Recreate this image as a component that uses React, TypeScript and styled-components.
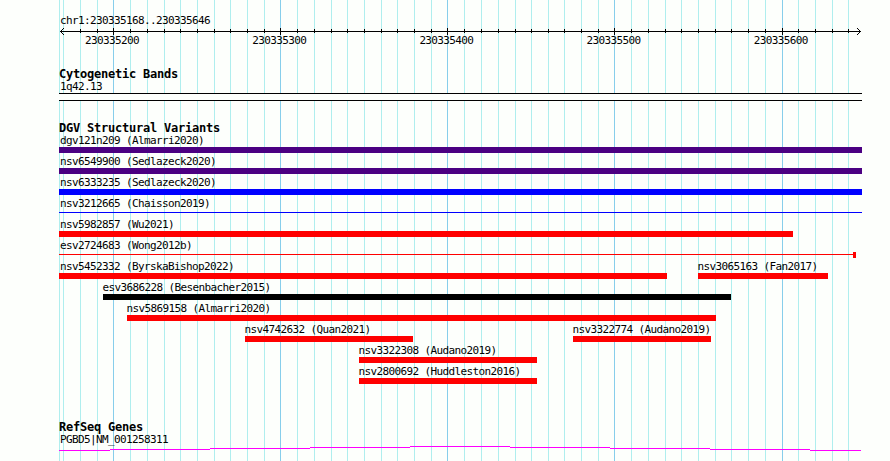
import styled, { createGlobalStyle } from 'styled-components'

const Colors = {
  Background: '#fdfffc',
  Grid: '#afeeee',
  GridMajor: '#87ceeb',
  Black: '#000',
  Indigo: '#4b0082',
  Blue: '#00f',
  Red: '#f00',
  Magenta: '#f0f',
}

const TRACK_WIDTH = 803

// offsets are pixels from the left edge of the tracks
const gridLines = [
  0, 4, 21, 38, 54, 71, 88, 105, 121, 138, 155, 171, 188, 205, 221, 238, 255, 272, 288, 305, 322, 338, 355, 372, 388,
  405, 422, 439, 456, 472, 489, 505, 522, 539, 555, 572, 589, 606, 622, 639, 656, 672, 689, 706, 723, 739, 756, 773,
  789,
]
const majorLines = [54, 221, 388, 555, 723]

const rulerLabels = ['230335200', '230335300', '230335400', '230335500', '230335600']

interface Variant {
  name: string
  start: number
  end: number
  color: string
  shape?: 'bar' | 'line' | 'capped'
}

const lanes: Variant[][] = [
  [{ name: 'dgv121n209 (Almarri2020)', start: 0, end: 803, color: Colors.Indigo }],
  [{ name: 'nsv6549900 (Sedlazeck2020)', start: 0, end: 803, color: Colors.Indigo }],
  [{ name: 'nsv6333235 (Sedlazeck2020)', start: 0, end: 803, color: Colors.Blue }],
  [{ name: 'nsv3212665 (Chaisson2019)', start: 0, end: 803, color: Colors.Blue, shape: 'line' }],
  [{ name: 'nsv5982857 (Wu2021)', start: 0, end: 734, color: Colors.Red }],
  [{ name: 'esv2724683 (Wong2012b)', start: 0, end: 797, color: Colors.Red, shape: 'capped' }],
  [
    { name: 'nsv5452332 (ByrskaBishop2022)', start: 0, end: 608, color: Colors.Red },
    { name: 'nsv3065163 (Fan2017)', start: 639, end: 769, color: Colors.Red },
  ],
  [{ name: 'esv3686228 (Besenbacher2015)', start: 44, end: 672, color: Colors.Black }],
  [{ name: 'nsv5869158 (Almarri2020)', start: 68, end: 657, color: Colors.Red }],
  [
    { name: 'nsv4742632 (Quan2021)', start: 186, end: 354, color: Colors.Red },
    { name: 'nsv3322774 (Audano2019)', start: 514, end: 652, color: Colors.Red },
  ],
  [{ name: 'nsv3322308 (Audano2019)', start: 300, end: 478, color: Colors.Red }],
  [{ name: 'nsv2800692 (Huddleston2016)', start: 300, end: 478, color: Colors.Red }],
]

const GridLines = () => (
  <GridSvg width={TRACK_WIDTH} height="461" shapeRendering="crispEdges">
    {gridLines.map((x) => (
      <rect key={x} x={x} y="0" width="1" height="461" fill={majorLines.includes(x) ? Colors.GridMajor : Colors.Grid} />
    ))}
  </GridSvg>
)

const Ruler = () => (
  <RulerWrapper>
    <Label>chr1:230335168..230335646</Label>
    <RulerSvg width={TRACK_WIDTH} height="7" shapeRendering="crispEdges">
      <rect x="1" y="3" width="801" height="1" />
      {gridLines.slice(2).map((x) => {
        const isMajor = majorLines.includes(x)
        return <rect key={x} x={x} y={isMajor ? 0 : 1} width="1" height={isMajor ? 7 : 4} />
      })}
      {[0, 1, 2, 3].map((i) => (
        <g key={i}>
          <rect x={1 + i} y={3 - i} width="1" height="1" />
          <rect x={1 + i} y={3 + i} width="1" height="1" />
          <rect x={801 - i} y={3 - i} width="1" height="1" />
          <rect x={801 - i} y={3 + i} width="1" height="1" />
        </g>
      ))}
    </RulerSvg>
    <RulerLabels>
      {rulerLabels.map((label) => (
        <Label key={label}>{label}</Label>
      ))}
    </RulerLabels>
  </RulerWrapper>
)

const VariantItem = ({ variant, offset }: { variant: Variant; offset: number }) => (
  <VariantWrapper $offset={offset} $width={variant.end - variant.start}>
    <Label $inset={variant.start === 0 ? 1 : -0.5}>{variant.name}</Label>
    <VariantShape>
      {variant.shape ? <ThinLine $color={variant.color} /> : <Bar $color={variant.color} />}
      {variant.shape === 'capped' && <Cap $color={variant.color} />}
    </VariantShape>
  </VariantWrapper>
)

const App = () => (
  <>
    <GlobalStyle />
    <Page>
      <GridLines />
      <Ruler />
      <CytogeneticTrack>
        <TrackTitle>Cytogenetic Bands</TrackTitle>
        <Label $inset={1}>1q42.13</Label>
        <Band />
      </CytogeneticTrack>
      <VariantsTrack>
        <TrackTitle>DGV Structural Variants</TrackTitle>
        {lanes.map((lane) => (
          <Lane key={lane[0].name}>
            {lane.map((variant, i) => (
              <VariantItem
                key={variant.name}
                variant={variant}
                offset={variant.start - (i > 0 ? lane[i - 1].end : 0)}
              />
            ))}
          </Lane>
        ))}
      </VariantsTrack>
      <GenesTrack>
        <TrackTitle>RefSeq Genes</TrackTitle>
        <Label $inset={1}>PGBD5|NM_001258311</Label>
        <GeneSvg width={TRACK_WIDTH} height="5" shapeRendering="crispEdges">
          {[4, 3, 2, 1, 0, 1, 2, 3, 4].map((y, i) => {
            const x = i === 0 ? 0 : i * 100 - 49
            const end = i === 8 ? 802 : i * 100 + 51
            return <rect key={x} x={x} y={y} width={end - x} height="1" fill={Colors.Magenta} />
          })}
        </GeneSvg>
      </GenesTrack>
    </Page>
  </>
)

export default App

const GlobalStyle = createGlobalStyle`
  body {
    margin: 0;
    background-color: ${Colors.Background};
  }
`

const Page = styled.main`
  position: relative;
  box-sizing: border-box;
  width: 890px;
  height: 461px;
  padding: 15px 28px 0 59px;
  overflow: hidden;
  background-color: ${Colors.Background};
  color: ${Colors.Black};
  font-family: 'DejaVu Sans Mono', monospace;
`

const GridSvg = styled.svg`
  position: absolute;
  top: 0;
  left: 59px;
`

const Label = styled.div<{ $inset?: number }>`
  height: 12px;
  margin-left: ${({ $inset = 0 }) => $inset}px;
  font-size: 11px;
  line-height: 12px;
  letter-spacing: -0.623px;
  white-space: pre;
`

const TrackTitle = styled.h2`
  height: 13px;
  margin: 0;
  font-size: 12px;
  font-weight: bold;
  line-height: 13px;
  letter-spacing: -0.225px;
  white-space: pre;
`

const RulerWrapper = styled.header`
  position: relative;
  height: 53px;

  > ${Label} {
    padding-left: 1px;
  }
`

const RulerSvg = styled.svg`
  display: block;
  margin-top: 1px;
`

const RulerLabels = styled.div`
  display: flex;
  gap: 113.2px;
  padding-left: 26px;

  ${Label} {
    width: 54px;
  }
`

const CytogeneticTrack = styled.section`
  position: relative;
  height: 54px;
`

const Band = styled.div`
  box-sizing: border-box;
  height: 8px;
  border: solid ${Colors.Black};
  border-width: 1px 0;
  background-color: ${Colors.Background};
`

const VariantsTrack = styled.section`
  position: relative;
  height: 299px;
`

const Lane = styled.div`
  display: flex;
  height: 21px;
`

const VariantWrapper = styled.div<{ $offset: number; $width: number }>`
  flex: none;
  width: ${({ $width }) => $width}px;
  margin-left: ${({ $offset }) => $offset}px;
`

const VariantShape = styled.div`
  display: flex;
  height: 6px;
`

const Bar = styled.div<{ $color: string }>`
  flex: 1;
  background-color: ${({ $color }) => $color};
`

const ThinLine = styled(Bar)`
  height: 1px;
  margin-top: 2px;
`

const Cap = styled.div<{ $color: string }>`
  width: 3px;
  background-color: ${({ $color }) => $color};
`

const GenesTrack = styled.section`
  position: relative;
`

const GeneSvg = styled.svg`
  display: block;
`
